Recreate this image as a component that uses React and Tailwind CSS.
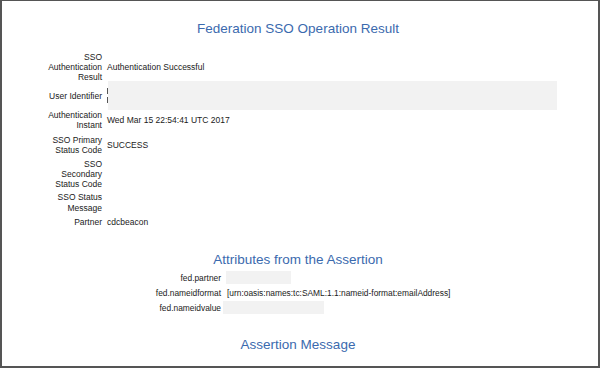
export default function App() {
  const font = { fontFamily: '"Liberation Sans", Arial, sans-serif' };
  return (
    <div
      className="w-[600px] h-[368px] overflow-hidden bg-white border-x-2 border-b-2 border-t border-[#555555] text-[#1a1a1a]"
      style={font}
    >
      <div className="pt-[20px] pr-[4px] text-center text-[13.5px] leading-[16px] text-[#3b6aae]">
        Federation SSO Operation Result
      </div>

      <div className="mt-[15px] ml-[44px] w-[511px] flex flex-col text-[8.5px] leading-[10px]">
        <div className="flex items-center">
          <div className="w-[56px] text-right">SSO Authentication Result</div>
          <div className="ml-[5px]">Authentication Successful</div>
        </div>
        <div className="flex items-center -mt-[1px]">
          <div className="w-[56px] text-right">User Identifier</div>
          <div className="ml-[5px] flex flex-1 items-stretch h-[29px]">
            <div className="w-[1px] flex flex-col justify-center gap-[3px]">
              <div className="h-[6px] w-[1px] bg-[#555555]" />
              <div className="h-[6px] w-[1px] bg-[#555555]" />
            </div>
            <div className="flex-1 bg-[#f2f2f2]" />
          </div>
        </div>
        <div className="flex items-center">
          <div className="w-[56px] text-right">Authentication Instant</div>
          <div className="ml-[5px]">Wed Mar 15 22:54:41 UTC 2017</div>
        </div>
        <div className="flex items-center mt-[5px]">
          <div className="w-[56px] text-right">SSO Primary Status Code</div>
          <div className="ml-[5px]">SUCCESS</div>
        </div>
        <div className="flex items-center mt-[4px]">
          <div className="w-[56px] text-right">SSO Secondary Status Code</div>
          <div className="ml-[5px]"></div>
        </div>
        <div className="flex items-center mt-[3px]">
          <div className="w-[56px] text-right leading-[10.5px]">SSO Status Message</div>
          <div className="ml-[5px]"></div>
        </div>
        <div className="flex items-center mt-[4px]">
          <div className="w-[56px] text-right">Partner</div>
          <div className="ml-[5px]">cdcbeacon</div>
        </div>
      </div>

      <div className="mt-[25px] pr-[4px] text-center text-[13.5px] leading-[16px] text-[#3b6aae]">
        Attributes from the Assertion
      </div>

      <div className="mt-[2px] ml-[147px] flex flex-col text-[8.4px] leading-[10px]">
        <div className="flex items-center h-[15px]">
          <div className="w-[72px] text-right">fed.partner</div>
          <div className="ml-[5px] w-[65px] h-[13px] bg-[#f2f2f2]" />
        </div>
        <div className="flex items-center h-[15px]">
          <div className="w-[72px] text-right">fed.nameidformat</div>
          <div className="ml-[6px]">[urn:oasis:names:tc:SAML:1.1:nameid-format:emailAddress]</div>
        </div>
        <div className="flex items-center h-[15px]">
          <div className="w-[72px] text-right">fed.nameidvalue</div>
          <div className="ml-[2px] w-[101px] h-[13px] bg-[#f2f2f2]" />
        </div>
      </div>

      <div className="mt-[22px] pr-[4px] text-center text-[13.5px] leading-[16px] text-[#3b6aae]">
        Assertion Message
      </div>
    </div>
  );
}
